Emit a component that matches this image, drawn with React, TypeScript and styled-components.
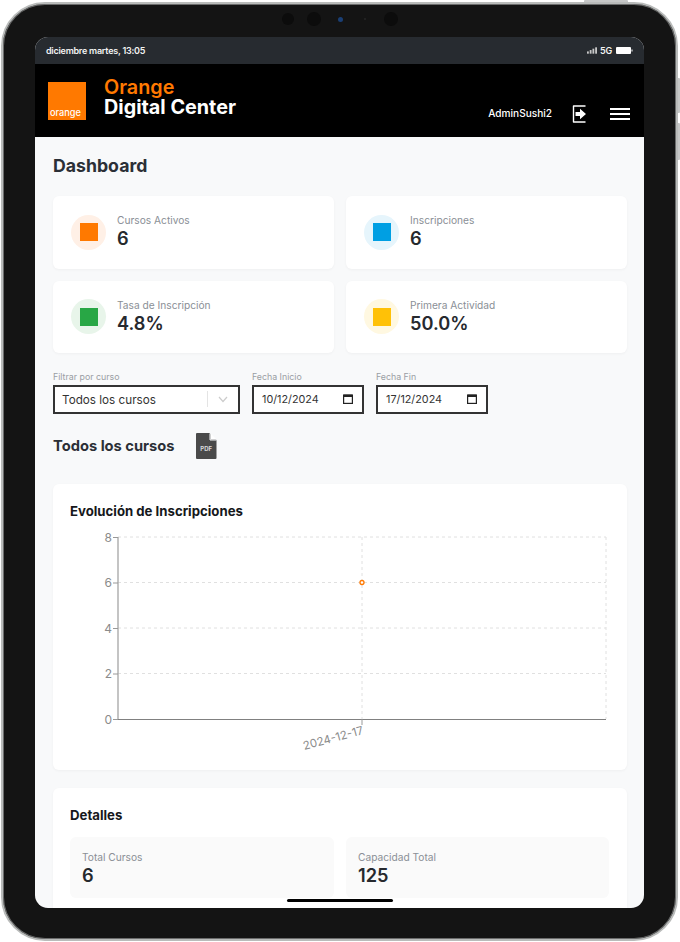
import React from "react";
import styled, { createGlobalStyle } from "styled-components";

const Global = createGlobalStyle`
  html, body { margin: 0; padding: 0; background: #fff; }
  body { width: 680px; height: 942px; overflow: hidden; font-family: Inter, "Liberation Sans", sans-serif; }
  * { box-sizing: border-box; }
`;

const Stage = styled.div`
  position: relative;
  width: 680px;
  height: 942px;
  padding: 2px 2px 1px 1px;
`;

const SideButton = styled.div<{ $top: number; $left: number; $w: number; $h: number }>`
  position: absolute;
  top: ${(p) => p.$top}px;
  left: ${(p) => p.$left}px;
  width: ${(p) => p.$w}px;
  height: ${(p) => p.$h}px;
  background: #c6c7c7;
  border-radius: 1px;
`;

const Device = styled.div`
  position: relative;
  width: 677px;
  height: 939px;
  padding: 33px 32px 31px 32px;
  background: #141414;
  border: 2px solid #b9bbba;
  border-radius: 44px;
  box-shadow: inset 0 0 0 1px #6b6c6c;
`;

const Camera = styled.div<{ $x: number; $size: number; $color: string }>`
  position: absolute;
  top: ${(p) => 15 - p.$size / 2}px;
  left: ${(p) => p.$x - 3 - p.$size / 2}px;
  width: ${(p) => p.$size}px;
  height: ${(p) => p.$size}px;
  border-radius: 50%;
  background: ${(p) => p.$color};
`;

const Screen = styled.div`
  position: relative;
  width: 609px;
  height: 871px;
  border-radius: 13px;
  overflow: hidden;
  background: #f8f9fa;
`;

const StatusBar = styled.div`
  height: 27px;
  background: #272b30;
  display: flex;
  align-items: center;
  justify-content: space-between;
  padding: 0 11px 0 11px;
  color: #f2f2f2;
  font-size: 9px;
  font-weight: 600;
  letter-spacing: -0.25px;
`;

const StatusRight = styled.div`
  display: flex;
  align-items: center;
  gap: 3px;
  font-weight: 600;
  font-size: 9px;
`;

const Header = styled.header`
  height: 73px;
  background: #000;
  display: flex;
  align-items: stretch;
  justify-content: space-between;
  padding: 18px 14px 0 13px;
`;

const Brand = styled.div`
  display: flex;
  align-items: flex-start;
  gap: 18px;
`;

const Logo = styled.div`
  width: 38px;
  height: 38px;
  background: #ff7900;
  display: flex;
  align-items: flex-end;
  padding: 0 0 2px 2px;
  color: #fff;
  font-size: 9.2px;
  font-weight: 500;
  line-height: 10px;
`;

const BrandText = styled.div`
  margin-top: -5px;
  font-size: 19.8px;
  font-weight: 700;
  line-height: 20px;
  color: #fff;
`;

const BrandAccent = styled.div`
  color: #ff7900;
  font-weight: 600;
`;

const HeaderRight = styled.div`
  display: flex;
  align-items: center;
  height: 46px;
  margin-top: 9px;
  color: #fff;
`;

const UserName = styled.span`
  font-size: 10.1px;
  font-weight: 500;
  margin-right: 20px;
  margin-top: -3px;
`;

const ExitButton = styled.div`
  display: flex;
  margin-right: 23px;
`;

const Burger = styled.div`
  width: 20px;
  display: flex;
  flex-direction: column;
  gap: 3.5px;
`;

const BurgerLine = styled.span`
  height: 1.5px;
  background: #fff;
`;

const Content = styled.main`
  padding: 18px 17px 0 18px;
`;

const PageTitle = styled.h1`
  margin: 0;
  font-size: 17.7px;
  font-weight: 700;
  line-height: 22px;
  color: #2b2f36;
`;

const StatGrid = styled.div`
  margin-top: 19px;
  display: grid;
  grid-template-columns: 281px 281px;
  grid-auto-rows: 72.5px;
  gap: 12px;
`;

const StatCard = styled.div`
  background: #fff;
  border-radius: 6px;
  box-shadow: 0 1px 3px rgba(0, 0, 0, 0.04);
  display: flex;
  align-items: center;
  gap: 11px;
  padding: 0 18px;
`;

const IconCircle = styled.div<{ $bg: string }>`
  width: 35px;
  height: 35px;
  border-radius: 50%;
  background: ${(p) => p.$bg};
  display: flex;
  align-items: center;
  justify-content: center;
`;

const IconSquare = styled.div<{ $color: string }>`
  width: 18px;
  height: 18px;
  background: ${(p) => p.$color};
`;

const StatBody = styled.div`
  display: flex;
  flex-direction: column;
  margin-top: -1px;
`;

const StatLabel = styled.div`
  font-size: 10.2px;
  line-height: 13px;
  color: #8a8f96;
`;

const StatValue = styled.div`
  margin-top: 1px;
  font-size: 18.2px;
  font-weight: 600;
  line-height: 21px;
  color: #26292e;
`;

const Filters = styled.div`
  margin-top: 17.5px;
  display: flex;
  gap: 12px;
`;

const Field = styled.div<{ $w: number }>`
  width: ${(p) => p.$w}px;
  display: flex;
  flex-direction: column;
  gap: 3px;
`;

const FieldLabel = styled.div`
  font-size: 8.8px;
  line-height: 11px;
  color: #9a9ea4;
`;

const FieldBox = styled.div`
  height: 29px;
  border: 2px solid #333;
  background: #fff;
  display: flex;
  align-items: center;
  color: #333;
`;

const SelectText = styled.span`
  flex: 1;
  padding: 1px 0 0 7px;
  font-size: 11.7px;
`;

const SelectDivider = styled.span`
  width: 1px;
  height: 16px;
  background: #e4e4e4;
`;

const SelectChevron = styled.span`
  display: flex;
  width: 30px;
  justify-content: center;
`;

const DateText = styled.span`
  flex: 1;
  padding-left: 8px;
  font-size: 10.8px;
`;

const DateIcon = styled.span`
  display: flex;
  margin-right: 9px;
`;

const CourseRow = styled.div`
  margin-top: 18.5px;
  height: 28px;
  display: flex;
  align-items: center;
  gap: 21px;
`;

const CourseTitle = styled.h2`
  margin: -1px 0 0;
  font-size: 14.7px;
  font-weight: 700;
  color: #2b2f36;
`;

const Panel = styled.section`
  background: #fff;
  border-radius: 6px;
  box-shadow: 0 1px 3px rgba(0, 0, 0, 0.04);
`;

const ChartPanel = styled(Panel)`
  margin-top: 24px;
  height: 286px;
  padding: 20px 17px 0;
`;

const PanelTitle = styled.h3`
  margin: -1px 0 0;
  font-size: 13.2px;
  font-weight: 700;
  line-height: 16px;
  color: #16181b;
`;

const ChartSvg = styled.svg`
  display: block;
  margin: 10px 0 0 -17px;
`;

const AxisText = styled.text`
  font-family: Inter, "Liberation Sans", sans-serif;
  font-size: 12px;
  fill: #8b8b8b;
`;

const TickText = styled(AxisText)`
  font-size: 11.5px;
`;

const DetailsPanel = styled(Panel)`
  margin-top: 18px;
  padding: 20px 18px 0 17px;
  height: 140px;
`;

const DetailsGrid = styled.div`
  margin-top: 14px;
  display: grid;
  grid-template-columns: 264px 263px;
  gap: 12px;
`;

const DetailCard = styled.div`
  height: 61px;
  background: #fafafa;
  border-radius: 6px;
  padding: 14px 12px;
`;

const DetailLabel = styled.div`
  font-size: 10.2px;
  line-height: 12px;
  color: #8a8f96;
`;

const DetailValue = styled.div`
  margin-top: 1px;
  font-size: 18.2px;
  font-weight: 600;
  line-height: 22px;
  color: #26292e;
`;

const HomeBar = styled.div`
  position: absolute;
  left: 252px;
  bottom: 6px;
  width: 106px;
  height: 3px;
  border-radius: 2px;
  background: #000;
`;

const stats = [
  { label: "Cursos Activos", value: "6", bg: "#fff0e6", color: "#ff7900" },
  { label: "Inscripciones", value: "6", bg: "#e6f5fc", color: "#009fe3" },
  { label: "Tasa de Inscripción", value: "4.8%", bg: "#e8f5ea", color: "#28a745" },
  { label: "Primera Actividad", value: "50.0%", bg: "#fff8e1", color: "#ffc107" },
];

const CalendarIcon = () => (
  <svg width="10" height="10" viewBox="0 0 10 10" fill="none">
    <rect x="0.6" y="1.1" width="8.8" height="8.3" stroke="#222" strokeWidth="1.2" />
    <rect x="0.6" y="0.6" width="8.8" height="2.4" fill="#222" />
  </svg>
);

const Chart = () => {
  const ys = [
    { v: "8", y: 4 },
    { v: "6", y: 49.5 },
    { v: "4", y: 95 },
    { v: "2", y: 140.5 },
    { v: "0", y: 186 },
  ];
  return (
    <ChartSvg width="574" height="229" viewBox="0 -4 574 229">
      {ys.slice(0, 4).map((t) => (
        <line key={t.y} x1="65" x2="553" y1={t.y} y2={t.y} stroke="#e0e0e0" strokeDasharray="3 3" />
      ))}
      <line x1="309" x2="309" y1="4" y2="186" stroke="#e0e0e0" strokeDasharray="3 3" />
      <line x1="553" x2="553" y1="4" y2="186" stroke="#e0e0e0" strokeDasharray="3 3" />
      <line x1="65" x2="65" y1="4" y2="186.5" stroke="#b0b0b0" strokeWidth="1.5" />
      <line x1="65" x2="553" y1="186.5" y2="186.5" stroke="#808080" />
      {ys.map((t) => (
        <g key={t.v}>
          <line x1="60" x2="65" y1={t.y + 0.5} y2={t.y + 0.5} stroke="#999" />
          <AxisText x="59" y={t.y + 4.5} textAnchor="end">{t.v}</AxisText>
        </g>
      ))}
      <line x1="309" x2="309" y1="186" y2="192" stroke="#999" />
      <TickText x="310" y="201" textAnchor="end" transform="rotate(-15 310 197)">2024-12-17</TickText>
      <circle cx="309" cy="49.5" r="2" fill="#fff" stroke="#ff7900" strokeWidth="1.3" />
    </ChartSvg>
  );
};

export default function App() {
  return (
    <>
      <Global />
      <Stage>
        <SideButton $top={0} $left={584} $w={44} $h={3} />
        <SideButton $top={78} $left={677} $w={3} $h={35} />
        <SideButton $top={123} $left={677} $w={3} $h={37} />
        <Device>
          <Camera $x={288} $size={12} $color="#0c0c0c" />
          <Camera $x={314} $size={14} $color="#0c0c0c" />
          <Camera $x={340} $size={5} $color="#1a3f75" />
          <Camera $x={365} $size={2} $color="#262626" />
          <Camera $x={391} $size={14} $color="#0c0c0c" />
          <Screen>
            <StatusBar>
              <span>diciembre martes, 13:05</span>
              <StatusRight>
                <svg width="10" height="7" viewBox="0 0 11 7" fill="#c8c8c8">
                  <rect x="0" y="4.5" width="2" height="2.5" />
                  <rect x="3" y="3" width="2" height="4" />
                  <rect x="6" y="1.5" width="2" height="5.5" />
                  <rect x="9" y="0" width="2" height="7" />
                </svg>
                <span>5G</span>
                <svg width="18" height="7" viewBox="0 0 18 7" fill="#fff">
                  <rect x="1" y="0" width="15" height="7" rx="1" />
                  <rect x="16.5" y="2.5" width="1" height="2" />
                </svg>
              </StatusRight>
            </StatusBar>
            <Header>
              <Brand>
                <Logo>orange</Logo>
                <BrandText>
                  <BrandAccent>Orange</BrandAccent>
                  Digital Center
                </BrandText>
              </Brand>
              <HeaderRight>
                <UserName>AdminSushi2</UserName>
                <ExitButton>
                  <svg width="15" height="18" viewBox="0 0 15 18" fill="none">
                    <path d="M13.5 1H1.5V17H13.5" stroke="#fff" strokeWidth="1.4" strokeLinejoin="round" />
                    <path d="M3.5 7H8V3.8L14 9L8 14.2V11H3.5Z" fill="#fff" />
                  </svg>
                </ExitButton>
                <Burger>
                  <BurgerLine />
                  <BurgerLine />
                  <BurgerLine />
                </Burger>
              </HeaderRight>
            </Header>
            <Content>
              <PageTitle>Dashboard</PageTitle>
              <StatGrid>
                {stats.map((s) => (
                  <StatCard key={s.label}>
                    <IconCircle $bg={s.bg}>
                      <IconSquare $color={s.color} />
                    </IconCircle>
                    <StatBody>
                      <StatLabel>{s.label}</StatLabel>
                      <StatValue>{s.value}</StatValue>
                    </StatBody>
                  </StatCard>
                ))}
              </StatGrid>
              <Filters>
                <Field $w={187}>
                  <FieldLabel>Filtrar por curso</FieldLabel>
                  <FieldBox>
                    <SelectText>Todos los cursos</SelectText>
                    <SelectDivider />
                    <SelectChevron>
                      <svg width="10" height="7" viewBox="0 0 10 7" fill="none">
                        <path d="M1 1L5 5.5L9 1" stroke="#cccccc" strokeWidth="1.2" />
                      </svg>
                    </SelectChevron>
                  </FieldBox>
                </Field>
                <Field $w={112}>
                  <FieldLabel>Fecha Inicio</FieldLabel>
                  <FieldBox>
                    <DateText>10/12/2024</DateText>
                    <DateIcon><CalendarIcon /></DateIcon>
                  </FieldBox>
                </Field>
                <Field $w={112}>
                  <FieldLabel>Fecha Fin</FieldLabel>
                  <FieldBox>
                    <DateText>17/12/2024</DateText>
                    <DateIcon><CalendarIcon /></DateIcon>
                  </FieldBox>
                </Field>
              </Filters>
              <CourseRow>
                <CourseTitle>Todos los cursos</CourseTitle>
                <svg width="21" height="26" viewBox="0 0 21 26">
                  <path d="M1 0H13.5L20.5 7V25a1 1 0 0 1-1 1H1a1 1 0 0 1-1-1V1a1 1 0 0 1 1-1Z" fill="#4a4a4a" />
                  <path d="M14.5 0L21 6.5H14.5Z" fill="#fff" />
                  <path d="M14 0.5V7H20.5" fill="none" stroke="#f8f9fa" strokeWidth="1" />
                  <text x="10.2" y="18" textAnchor="middle" fontSize="6" fontWeight="700" fill="#d8d8d8" fontFamily="Inter, sans-serif">PDF</text>
                </svg>
              </CourseRow>
              <ChartPanel>
                <PanelTitle>Evolución de Inscripciones</PanelTitle>
                <Chart />
              </ChartPanel>
              <DetailsPanel>
                <PanelTitle>Detalles</PanelTitle>
                <DetailsGrid>
                  <DetailCard>
                    <DetailLabel>Total Cursos</DetailLabel>
                    <DetailValue>6</DetailValue>
                  </DetailCard>
                  <DetailCard>
                    <DetailLabel>Capacidad Total</DetailLabel>
                    <DetailValue>125</DetailValue>
                  </DetailCard>
                </DetailsGrid>
              </DetailsPanel>
            </Content>
            <HomeBar />
          </Screen>
        </Device>
      </Stage>
    </>
  );
}
